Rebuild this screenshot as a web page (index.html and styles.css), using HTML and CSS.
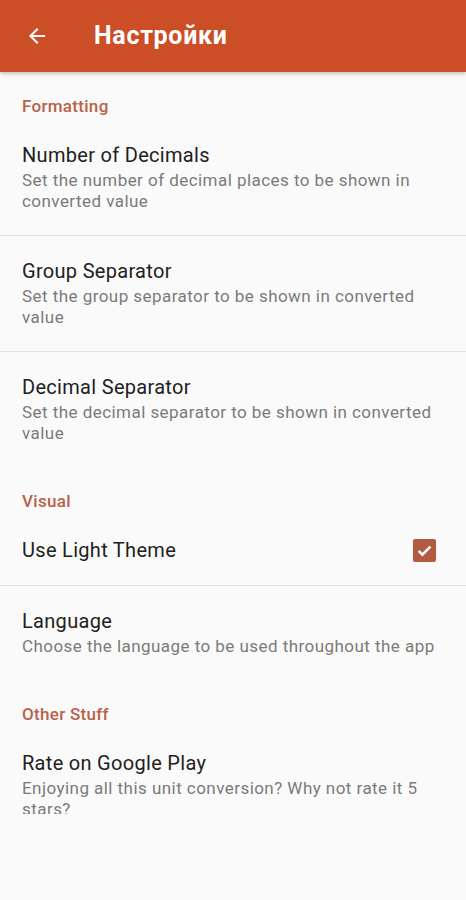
FILE: index.html
```html
<!DOCTYPE html>
<html lang="ru">
<head>
<meta charset="utf-8">
<title>Настройки</title>
<link rel="stylesheet" href="styles.css">
</head>
<body>
<header class="appbar">
  <svg class="back" width="24" height="24" viewBox="0 0 24 24"><path d="M20 11H7.83l5.59-5.59L12 4l-8 8 8 8 1.41-1.41L7.83 13H20v-2z" fill="#fff"/></svg>
  <h1 class="appbar-title">Настройки</h1>
</header>
<main class="list">
  <div class="category">Formatting</div>
  <div class="item divided">
    <div class="item-title">Number of Decimals</div>
    <div class="item-summary">Set the number of decimal places to be shown in converted value</div>
  </div>
  <div class="item divided">
    <div class="item-title">Group Separator</div>
    <div class="item-summary">Set the group separator to be shown in converted value</div>
  </div>
  <div class="item">
    <div class="item-title">Decimal Separator</div>
    <div class="item-summary">Set the decimal separator to be shown in converted value</div>
  </div>
  <div class="category">Visual</div>
  <div class="item divided item-row">
    <div class="item-title">Use Light Theme</div>
    <span class="checkbox"><svg width="19" height="19" viewBox="0 0 19 19"><path d="M3.6 9.8l3.8 3.8L15.4 5.6" fill="none" stroke="#fff" stroke-width="2.6"/></svg></span>
  </div>
  <div class="item">
    <div class="item-title">Language</div>
    <div class="item-summary">Choose the language to be used throughout the app</div>
  </div>
  <div class="category">Other Stuff</div>
  <div class="item">
    <div class="item-title">Rate on Google Play</div>
    <div class="item-summary">Enjoying all this unit conversion? Why not rate it 5 stars?</div>
  </div>
</main>
</body>
</html>
```
FILE: styles.css
```css
html, body {
  margin: 0;
  padding: 0;
  background: #fafafa;
  font-family: Roboto, "Noto Sans", sans-serif;
}
.appbar {
  height: 72px;
  background: #cc4e26;
  display: flex;
  align-items: center;
  padding-left: 25px;
  box-shadow: 0 2px 4px rgba(0,0,0,0.22);
  position: relative;
  z-index: 1;
}
.back {
  width: 24px;
  height: 24px;
}
.appbar-title {
  margin: 0 0 0 45px;
  color: #fff;
  font-size: 25px;
  font-weight: 700;
  letter-spacing: 0.7px;
  line-height: 28px;
}
.list {
  height: 742px;
  overflow: hidden;
}
.category {
  padding: 24px 24px 4px 22px;
  line-height: 20px;
  font-size: 17px;
  font-weight: 500;
  letter-spacing: 0.3px;
  color: #b8614b;
}
.item {
  padding: 23px 24px 23px 22px;
}
.item.divided {
  border-bottom: 1px solid #e2e2e2;
}
.item-row {
  display: flex;
  align-items: center;
  justify-content: space-between;
  padding-right: 30px;
}
.item-title {
  font-size: 20px;
  line-height: 24px;
  letter-spacing: 0.3px;
  color: #212121;
}
.item-summary {
  margin-top: 3px;
  font-size: 17px;
  line-height: 21px;
  letter-spacing: 0.45px;
  color: #7a7a7a;
}
.checkbox {
  width: 23px;
  height: 23px;
  border-radius: 2px;
  background: #b35a42;
  display: flex;
  align-items: center;
  justify-content: center;
}
```
